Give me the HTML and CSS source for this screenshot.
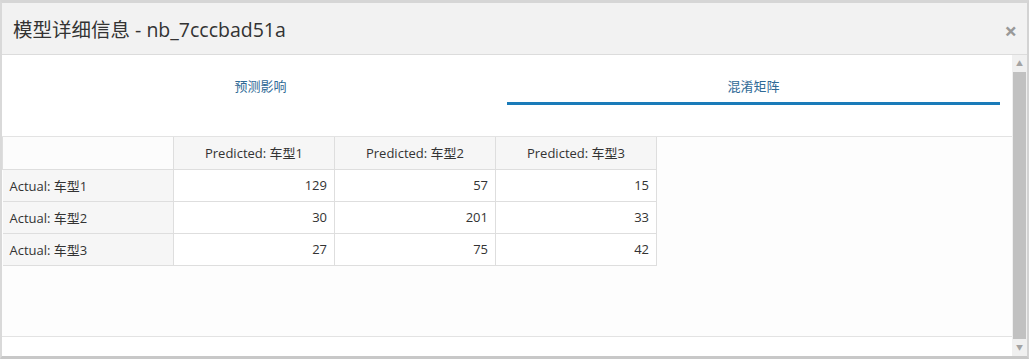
FILE: index.html
```html
<!DOCTYPE html>
<html lang="zh-CN">
<head>
  <meta charset="UTF-8">
  <meta name="viewport" content="width=device-width, initial-scale=1.0">
  <title>模型详细信息</title>
  <link rel="stylesheet" href="styles.css">
</head>
<body>
  <div class="modal">
    <div class="modal-header">
      <h4 class="modal-title">模型详细信息 - nb_7cccbad51a</h4>
      <span class="close">×</span>
    </div>

    <div class="modal-main">
      <div class="modal-body">
        <ul class="tabs">
          <li class="tab">预测影响</li>
          <li class="tab active">混淆矩阵</li>
        </ul>

        <table class="matrix">
          <thead>
            <tr>
              <th class="corner"></th>
              <th>Predicted: 车型1</th>
              <th>Predicted: 车型2</th>
              <th>Predicted: 车型3</th>
            </tr>
          </thead>
          <tbody>
            <tr>
              <th class="row-label">Actual: 车型1</th>
              <td>129</td><td>57</td><td>15</td>
            </tr>
            <tr>
              <th class="row-label">Actual: 车型2</th>
              <td>30</td><td>201</td><td>33</td>
            </tr>
            <tr>
              <th class="row-label">Actual: 车型3</th>
              <td>27</td><td>75</td><td>42</td>
            </tr>
          </tbody>
        </table>

        <div class="spacer"></div>
        <div class="modal-footer"></div>
      </div>

      <div class="scrollbar">
        <div class="arrow">▲</div>
        <div class="thumb"></div>
        <div class="arrow">▼</div>
      </div>
    </div>
  </div>
</body>
</html>
```

FILE: styles.css
```css
html, body {
  margin: 0;
  height: 100%;
  background: #fff;
}
body {
  font-family: "Open Sans", "Noto Sans CJK SC", sans-serif;
  color: #333;
}
.modal {
  width: 1029px;
  height: 359px;
  box-sizing: border-box;
  border-top: 3px solid #d6d6d6;
  border-left: 2px solid #d9d9d9;
  border-right: 2px solid #d3d3d3;
  border-bottom: 3px solid #c8c8c8;
  display: flex;
  flex-direction: column;
  background: #fdfdfd;
}
.modal-header {
  height: 52px;
  flex-shrink: 0;
  box-sizing: border-box;
  background: #f2f2f2;
  border-bottom: 1px solid #dcdcdc;
  display: flex;
  align-items: center;
  justify-content: space-between;
  padding: 0 10px 0 11px;
}
.modal-title {
  margin: 0;
  font-size: 19.5px;
  font-weight: normal;
  color: #333;
}
.close {
  font-size: 22px;
  font-weight: bold;
  color: #999;
  line-height: 1;
  padding-top: 2px;
}
.modal-main {
  flex: 1;
  display: flex;
  min-height: 0;
}
.modal-body {
  flex: 1;
  display: flex;
  flex-direction: column;
  background: #fdfdfd;
}
.tabs {
  list-style: none;
  margin: 0;
  padding: 0 12px 31px 12px;
  display: flex;
  border-bottom: 1px solid #e3e3e3;
  background: #fff;
}
.tab {
  flex: 1;
  text-align: center;
  font-size: 13px;
  line-height: 18px;
  color: #2f6a96;
  padding: 22px 0 7px;
  border-bottom: 3px solid transparent;
}
.tab.active {
  border-bottom-color: #1a7bb9;
}
.matrix {
  align-self: flex-start;
  border-collapse: collapse;
  table-layout: fixed;
  width: 654px;
  font-size: 13px;
  color: #333;
}
.matrix th, .matrix td {
  border: 1px solid #dedede;
  height: 32px;
  box-sizing: border-box;
  padding: 0 7px;
  font-weight: normal;
}
.matrix td {
  text-align: right;
  background: #fff;
}
.matrix thead th {
  width: 161px;
  background: #f6f6f6;
  text-align: center;
  border-top: none;
}
.matrix thead th.corner {
  width: 171px;
  background: #fcfcfc;
}
.matrix .row-label {
  text-align: left;
  background: #f6f6f6;
  border-left: none;
}
.spacer {
  flex: 1;
}
.modal-footer {
  height: 19px;
  border-top: 1px solid #e3e3e3;
  background: #fff;
}
.scrollbar {
  width: 15px;
  background: #f0f0f0;
  display: flex;
  flex-direction: column;
  align-items: center;
}
.arrow {
  height: 17px;
  font-size: 7px;
  line-height: 17px;
  color: #a3a3a3;
}
.thumb {
  flex: 1;
  width: 13px;
  background: #c1c1c1;
}
```
